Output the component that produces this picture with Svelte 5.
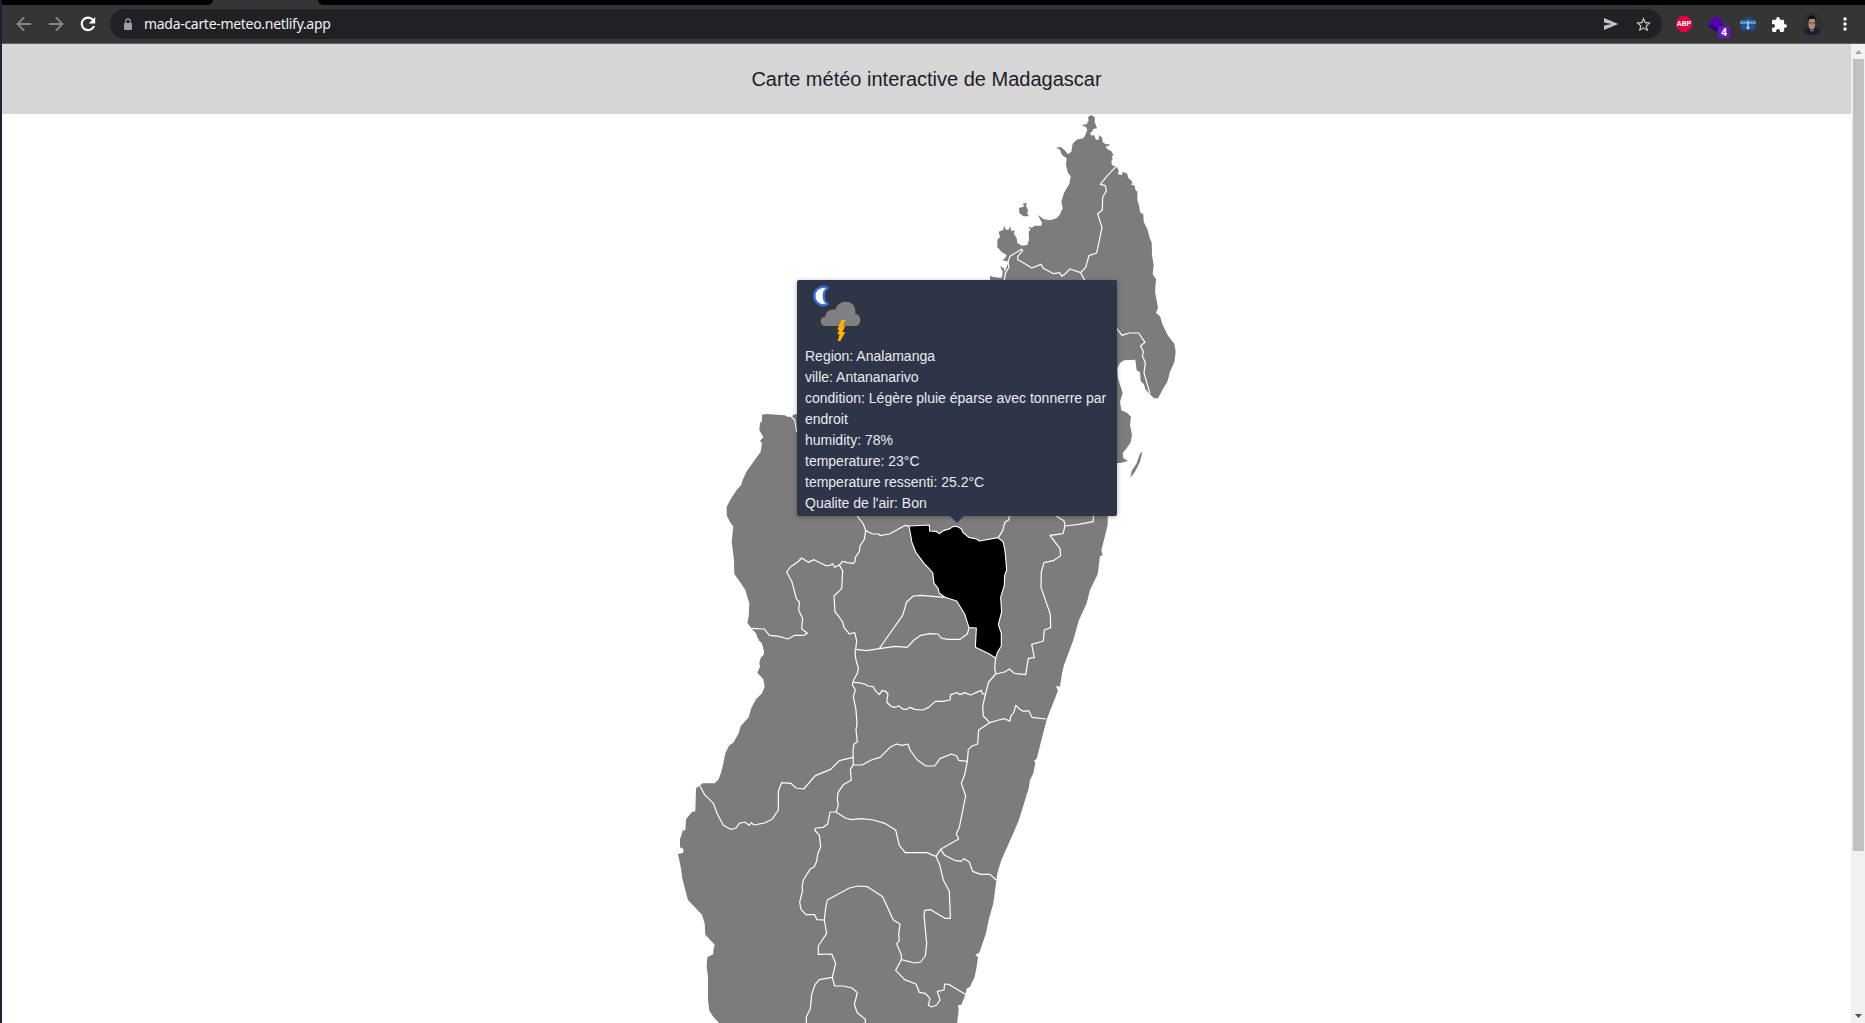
<script>
  const lines = [
    'Region: Analamanga',
    'ville: Antananarivo',
    'condition: Légère pluie éparse avec tonnerre par endroit',
    'humidity: 78%',
    'temperature: 23°C',
    'temperature ressenti: 25.2°C',
    "Qualite de l'air: Bon"
  ];

  // Map sectors: each has an origin on a grid three times finer than the page.
  const sectors = [
    {
      name: 'north', x: 2820, y: 315,
      land: [
        '455,30 465,38 464,50 471,70 460,72 456,80 450,84 455,92 462,90 468,104 476,104 478,90 487,100 488,112 498,118 510,118 504,124 496,124 504,134 514,138 520,150 515,155 518,160 514,170 516,180 530,186 536,196 534,208 546,210 548,200 562,206 564,218 572,224 578,234 572,238 584,242 586,254 592,260 592,285 598,305 600,322 610,328 611,350 622,372 630,402 635,412 636,450 641,480 638,508 648,522 645,560 654,608 648,624 660,634 668,660 684,692 703,716 707,740 703,772 690,800 682,830 670,850 654,880 642,880 628,866 616,852 612,838 602,828 600,802 590,796 586,764 552,766 540,774 532,790 534,820 548,864 540,890 544,916 562,924 573,936 570,960 576,990 572,1012 560,1030 548,1044 550,1060 564,1068 540,1074 520,1074 503,1226 -400,1226 -400,900 150,540 150,512 160,516 178,518 186,518 188,500 180,484 192,490 194,500 206,470 188,466 196,458 200,450 184,440 172,426 172,404 180,396 176,380 190,374 192,362 198,374 206,374 210,364 214,378 224,376 222,386 230,400 232,414 246,422 262,420 267,404 266,380 272,374 264,366 276,368 284,362 304,362 306,354 294,330 310,342 330,346 350,340 360,328 368,310 364,290 372,264 388,236 392,214 384,204 378,180 380,160 366,150 360,134 348,128 362,126 374,136 384,148 394,140 398,116 410,104 430,100 436,90 442,74 438,66 424,60 440,58 446,46 444,36',
        '237,308 250,306 252,302 248,296 260,293 258,304 264,314 262,326 267,334 250,334 238,324',
        '607,1040 600,1070 585,1100 571,1118 575,1098 590,1075 600,1046'
      ],
      borders: [
        '528,185 502,212 481,238 496,242 499,258 488,276 487,315 473,326 486,368 470,444 447,452 437,487 422,503 390,492 376,506 365,514 359,503 341,506 310,490 303,478 275,489 245,470 233,464 233,455 248,436 244,433 210,454 204,470 207,486 196,505 193,526',
        '422,503 434,526',
        '530,670 546,691 568,684 596,684 615,712 602,722 610,740 607,754 616,772 612,804 630,866'
      ]
    },
    {
      name: 'west', x: 2100, y: 1200,
      land: [
        '186,44 200,42 255,46 262,50 275,50 280,44 291,42 400,42 400,340 780,340 780,780 185,780 192,770 192,752 186,728 174,716 168,700 155,686 142,668 146,650 148,610 136,570 120,546 103,522 102,480 95,425 100,380 90,366 80,346 80,320 92,298 110,270 124,254 128,240 140,214 160,186 182,155 186,130 180,122 190,112 178,90 180,70 186,62'
      ],
      borders: [
        '272,48 284,60 290,96',
        '470,346 490,372 497,392 493,418 480,438 478,455 466,472 465,484 460,490 442,488 428,484 418,495 404,502 398,491 390,496 378,497 342,479 325,487 305,474 293,486 272,500 260,516 276,546 289,596 298,606 296,630 308,656 305,686 322,700 312,706 284,706 264,717 236,709 208,706 193,687 154,685',
        '497,392 518,402 537,402 540,407 568,402 616,376 628,379',
        '418,495 428,512 425,566 402,588 405,636 412,644 428,666 432,682 448,702 464,698 470,722 467,748',
        '467,748 500,752 538,746 586,739 622,742',
        '538,746 560,714 608,646 620,606 640,588 662,586 735,592'
      ]
    },
    {
      name: 'centre', x: 2580, y: 1500,
      land: [
        '0,20 743,40 743,75 732,120 724,150 728,166 720,168 715,210 712,225 690,270 680,310 656,362 640,420 612,495 606,520 600,560 588,558 594,572 560,658 526,780 0,780'
      ],
      borders: [
        '327,383 322,402 300,418 262,418 243,414 234,402 210,401 182,406 162,420 142,442',
        '407,474 404,502 407,522 386,546 376,584 368,620 370,648 389,668 356,690 353,732 336,738 325,748',
        '407,522 434,516 448,507 463,520 497,524 505,475 523,473 515,433 550,423 553,390 572,383 571,343 543,262 544,216 552,188 580,182 602,167 600,146 570,106 609,101 615,78 612,62 588,48',
        '615,78 656,73 700,65 700,44',
        '449,46 446,60 435,66 428,92 415,113',
        '-6,548 14,552 24,558 40,560 46,572 58,584 66,572 76,573 84,582 80,606 92,618 102,622 116,618 130,628 140,628 150,622 164,628 188,630 206,622 226,604 248,604 270,600 272,584 292,578 300,584 314,578 332,585 350,577 364,571 368,582 376,582',
        '389,668 416,660 434,656 450,664 452,650 462,636 467,616 482,630 492,634 506,632 516,652 558,657'
      ]
    },
    {
      name: 'southwest', x: 2010, y: 1920,
      land: [
        '265,0 276,10 284,40 272,54 268,68 270,80 262,98 280,118 284,140 276,160 258,178 244,204 236,232 220,250 212,258 206,280 190,308 178,316 166,340 160,370 155,392 146,418 134,430 98,430 88,438 78,445 76,514 66,516 48,538 46,570 40,572 37,562 38,574 30,598 30,622 40,626 40,638 24,642 32,680 38,720 54,780 96,824 104,850 106,884 134,914 130,930 130,942 112,952 110,980 114,1010 114,1080 118,1112 130,1130 150,1152 780,1152 780,0'
      ],
      borders: [
        '555,28 557,56 565,84 562,100 550,122 547,134 556,150 550,170 558,210 561,250 558,270 562,306 552,312 549,330 550,374 541,388 544,420 520,434 504,458 502,480 505,496 498,516',
        '550,127 564,128',
        '90,438 104,464 130,490 142,522 160,556 182,568 198,564 208,550 224,546 238,556 244,548 252,555 284,549 306,538 325,510 325,454 335,428 363,430 378,444 401,447 436,407 482,388 508,362 549,352',
        '550,375 576,375 604,360 630,352 660,322 680,312 696,316 714,312',
        '498,516 526,534 544,539 574,536 610,540 644,550 677,570 688,616 705,637 714,638',
        '498,516 480,516 473,552 460,562 438,564 434,570 448,586 452,620 443,642 440,664 432,682 420,688 400,720 396,742 398,752 389,786 393,808 408,824 434,824 441,839 462,840',
        '694,959 694,944 680,912 688,902 686,884 690,852 670,840 638,770 592,740 564,738 538,744 472,780 467,804 463,840 470,880 445,918 445,943 485,942 497,970 487,1012 448,1019 435,1034 425,1064 421,1106 409,1130 409,1152',
        '487,1012 494,1038 520,1038 546,1044 562,1058 553,1094 562,1118 586,1138 586,1152'
      ]
    },
    {
      name: 'southeast', x: 2640, y: 2100,
      land: [
        '0,0 520,0 500,58 470,176 462,180 466,188 460,220 450,240 446,265 416,362 382,440 364,480 352,520 344,580 340,610 326,660 318,700 298,758 286,764 294,772 290,800 284,830 270,860 260,866 256,884 244,914 234,916 236,930 231,972 0,972'
      ],
      borders: [
        '84,132 90,150 112,180 138,198 164,198 180,176 214,162 230,168 236,181 262,184',
        '265,148 262,184 254,224 244,250 257,288 238,382 229,402 236,417 182,448 168,469 140,458 74,458',
        '182,448 194,466 224,481 244,484 252,476 268,486 278,514 302,523 330,523 349,540',
        '168,469 179,494 190,540 208,574 211,655 195,655 152,629 134,631 132,646 140,730 136,768 122,786 104,789 64,779',
        '64,779 47,811 74,839 108,852 118,877 136,880 150,896 145,916 155,921 170,915 180,900 172,874 192,870 194,852 206,853 258,884'
      ]
    }
  ];

  const selected =
    '147,78 208,75 209,93 228,94 239,101 250,92 270,86 278,80 290,79 304,86 308,96 326,112 350,117 358,123 414,113 430,126 436,160 440,210 434,226 433,256 422,292 425,336 415,374 424,400 424,438 413,456 407,474 384,460 346,442 349,384 327,383 314,342 290,303 255,292 238,280 234,264 222,250 218,218 192,190 168,158 156,128';
</script>

<div class="window">
  <div class="tabstrip"><span class="tab-left"></span><span class="tab"></span><span class="tab-right"></span></div>
  <div class="toolbar">
    <svg class="nav" viewBox="0 0 16 16"><path d="M15 8H2M8 1.5 1.5 8 8 14.5" /></svg>
    <svg class="nav" viewBox="0 0 16 16"><path d="M1 8h13M8 1.5 14.5 8 8 14.5" /></svg>
    <svg class="nav reload" viewBox="0 0 16 16"><path d="M13.2 4.2A6.3 6.3 0 1 0 14 10" /><path class="solid" d="M15.2 1v6.4H8.8z" /></svg>
    <div class="address">
      <svg class="lock" viewBox="0 0 10 13"><rect x="1" y="5" width="8" height="7" rx="1" /><path d="M2.7 5V3.2a2.3 2.3 0 0 1 4.6 0V5" /></svg>
      <span class="url">mada-carte-meteo.netlify.app</span>
      <svg class="send" viewBox="0 0 16 14"><path d="M1 1 15.3 7 1 13V8.5L8.5 7 1 5.5z" /></svg>
      <svg class="star" viewBox="2 2 20 19"><path d="m22 9.24-7.19-.62L12 2 9.19 8.63 2 9.24l5.46 4.73L5.82 21 12 17.27 18.18 21l-1.63-7.03zM12 15.4l-3.76 2.27 1-4.28-3.32-2.88 4.38-.38L12 6.1l1.71 4.04 4.38.38-3.32 2.88 1 4.28z" /></svg>
    </div>
    <div class="extensions">
      <div class="abp">ABP</div>
      <div class="layers">
        <svg viewBox="0 0 16 17"><path fill="#310080" d="m0 10 8-4 8 4-8 6z" /><path fill="#5300b5" d="m0 6 8-6 8 6-8 6z" /></svg>
        <span class="count">4</span>
      </div>
      <svg class="box" viewBox="0 0 16 14"><path fill="#1d4f80" d="M4 3 7 0h3l3 3z" /><rect y="3" width="16" height="4" rx="1" fill="#356ea6" /><rect y="5" width="16" height="1.5" fill="#79acd6" /><rect x="1" y="7" width="14" height="6" fill="#244f9a" /><path fill="#a9cde8" d="M7.2 4h1.6v6h1.4L8 13l-2.2-3h1.4z" /></svg>
      <svg class="puzzle" viewBox="2 1 21 21"><path d="M20.5 11H19V7c0-1.1-.9-2-2-2h-4V3.5a2.5 2.5 0 0 0-5 0V5H4c-1.1 0-1.99.9-1.99 2v3.8H3.5c1.49 0 2.7 1.21 2.7 2.7s-1.21 2.7-2.7 2.7H2V20c0 1.1.9 2 2 2h3.8v-1.5c0-1.49 1.21-2.7 2.7-2.7s2.7 1.21 2.7 2.7V22H17c1.1 0 2-.9 2-2v-4h1.5a2.5 2.5 0 0 0 0-5z" /></svg>
      <svg class="avatar" viewBox="0 0 22 22"><circle cx="11" cy="11" r="11" fill="#2b332f" /><path fill="#182039" d="M3 19c1-4 4-5 8-5s7 1 8 5a11 11 0 0 1-16 0z" /><path fill="#b58873" d="M7.5 6h6.6v6c0 3-1.5 4.5-3.3 4.5S7.5 15 7.5 12z" /><path fill="#111" d="M7 9C5 0 17 0 14.8 9l-1-3H8.5z" /><path stroke="#44302b" d="M8 10h2.3m1.2 0H14" /><path stroke="#7d8ca5" d="m9 17 2 1 2-1" fill="none" /></svg>
      <svg class="menu" viewBox="0 0 4 14"><circle cx="2" cy="2" r="1.7" /><circle cx="2" cy="7" r="1.7" /><circle cx="2" cy="12" r="1.7" /></svg>
    </div>
  </div>

  <div class="viewport">
    <main>
      <header>Carte météo interactive de Madagascar</header>
      <div class="stage">
        <svg class="map" viewBox="2 114 1849 909">
          <g transform="scale(0.333333)">
            {#each sectors as s (s.name)}
              <g class="land" transform="translate({s.x} {s.y})">
                {#each s.land as points}<polygon {points} />{/each}
              </g>
            {/each}
            {#each sectors as s (s.name)}
              <g class="border" transform="translate({s.x} {s.y})">
                {#each s.borders as points}<polyline {points} />{/each}
              </g>
            {/each}
            <polygon class="selected" transform="translate(2580 1500)" points={selected} />
          </g>
        </svg>
        <div class="tooltip">
          <svg class="weather" viewBox="75 33 192 192">
            <path d="M144 54A27.5 27.5 0 1 0 144 102C127 93 127 63 144 54z" fill="#fff" stroke="#3a6fe0" stroke-width="7" stroke-linejoin="bevel" />
            <path class="cloud" d="M136 168a14 14 0 0 1 0-28c1-15 13-24 30-21 9-32 59-32 60 4v9c21 3 20 36-1 36z" />
            <path d="M184 150h13l-9 17h8l-9 19h9l-15 27h-8l6-20h-7l6-14h-6z" fill="#ffb400" />
          </svg>
          {#each lines as line}<p>{line}</p>{/each}
          <span class="arrow"></span>
        </div>
      </div>
    </main>
    <div class="scrollbar">
      <svg class="up" viewBox="0 0 7 4"><path d="m0 4 3.5-4L7 4z" /></svg>
      <span class="thumb"></span>
      <svg class="down" viewBox="0 0 7 4"><path d="m0 0 3.5 4L7 0z" /></svg>
    </div>
  </div>
</div>

<style>
  :global(body) { overflow: hidden; background: #fff; }
  .window { box-sizing: border-box; width: 1865px; height: 1023px; border-left: 2px solid #17243a; display: flex; flex-direction: column; font-family: "Liberation Sans", Arial, sans-serif; }
  .tabstrip { height: 5px; display: flex; background: #353535; flex: none; }
  .tab-left { width: 211px; background: #000; border-bottom-right-radius: 5px; }
  .tab { width: 105px; }
  .tab-right { flex: 1; background: #000; border-bottom-left-radius: 5px; }
  .toolbar { box-sizing: border-box; height: 39px; flex: none; display: flex; align-items: center; background: #353535; border-bottom: 1px solid #655f5f; padding: 0 18px 0 14px; }
  .nav { width: 16px; height: 16px; flex: none; margin-right: 16px; fill: none; stroke: #888; stroke-width: 1.8; }
  .reload { stroke: #fff; stroke-width: 2.2; margin-right: 14px; }
  .solid { fill: #fff; stroke: none; }
  .address { box-sizing: border-box; width: 1552px; height: 30px; flex: none; border-radius: 15px; background: #202124; display: flex; align-items: center; padding: 0 11px 0 13px; }
  .lock { width: 10px; height: 13px; fill: #9aa0a6; }
  .lock path { fill: none; stroke: #9aa0a6; stroke-width: 1.3; }
  .url { margin-left: 11px; flex: 1; color: #f1f1f1; font: 14px/20px "Noto Sans", sans-serif; letter-spacing: -0.3px; }
  .send { width: 16px; height: 14px; fill: #c1c2c4; margin-right: 17px; }
  .star { width: 15px; height: 14.5px; fill: #c4c5c7; }
  .extensions { flex: 1; display: flex; align-items: center; margin-left: 14px; }
  .abp { width: 16px; height: 16px; background: #e3003f; color: #fff; font: bold 7.5px/16px Roboto, sans-serif; text-align: center; clip-path: polygon(30% 0, 70% 0, 100% 30%, 100% 70%, 70% 100%, 30% 100%, 0 70%, 0 30%); }
  .layers { position: relative; width: 16px; height: 17px; margin-left: 16px; }
  .layers svg { display: block; width: 16px; height: 17px; }
  .count { position: absolute; left: 10px; top: 10px; width: 12px; height: 12px; border-radius: 2px; background: #6a18bd; color: #fff; font: bold 10px/12px "Open Sans", sans-serif; text-align: center; }
  .box { width: 16px; height: 14px; margin-left: 16px; }
  .puzzle { width: 15px; height: 15px; fill: #fff; margin-left: 16px; }
  .avatar { width: 22px; height: 22px; margin-left: 14px; }
  .menu { width: 4px; height: 14px; fill: #fff; margin-left: auto; }
  .viewport { flex: 1; display: flex; min-height: 0; }
  main { width: 1849px; display: flex; flex-direction: column; background: #fff; }
  header { height: 70px; flex: none; background: #d6d6d6; color: #1e1b2a; text-align: center; font-size: 20px; line-height: 70px; }
  .stage { position: relative; flex: 1; min-height: 0; }
  .map { display: block; width: 1849px; height: 909px; }
  .land { fill: #7c7c7c; }
  .border { fill: none; stroke: #fff; stroke-width: 3.6; stroke-linejoin: round; }
  .selected { fill: #000; stroke: #fff; stroke-width: 3.4; stroke-linejoin: round; }
  .tooltip { position: absolute; left: 795px; top: 166px; box-sizing: border-box; width: 320px; height: 236px; padding: 1px 8px 0; border-radius: 2px; background: #2f3548; color: #ebebee; font-size: 14px; line-height: 21px; box-shadow: 0 1px 5px rgba(0, 0, 0, 0.3); }
  .tooltip p { margin: 0; }
  .weather { display: block; width: 64px; height: 64px; margin-bottom: 1px; }
  .cloud { fill: #7f8083; stroke: #333433; stroke-width: 14; paint-order: stroke; }
  .arrow { position: absolute; left: 153px; top: 236px; border: 7px solid transparent; border-bottom: 0; border-top-color: #2f3548; }
  .scrollbar { width: 14px; background: #f1f1f1; display: flex; flex-direction: column; align-items: center; box-sizing: border-box; padding: 6px 0 5px; }
  .up { width: 7px; height: 4px; fill: #a3a3a3; }
  .thumb { width: 11px; height: 792px; margin-top: 5px; background: #c1c1c1; }
  .down { width: 7px; height: 4px; fill: #505050; margin-top: auto; }
</style>
